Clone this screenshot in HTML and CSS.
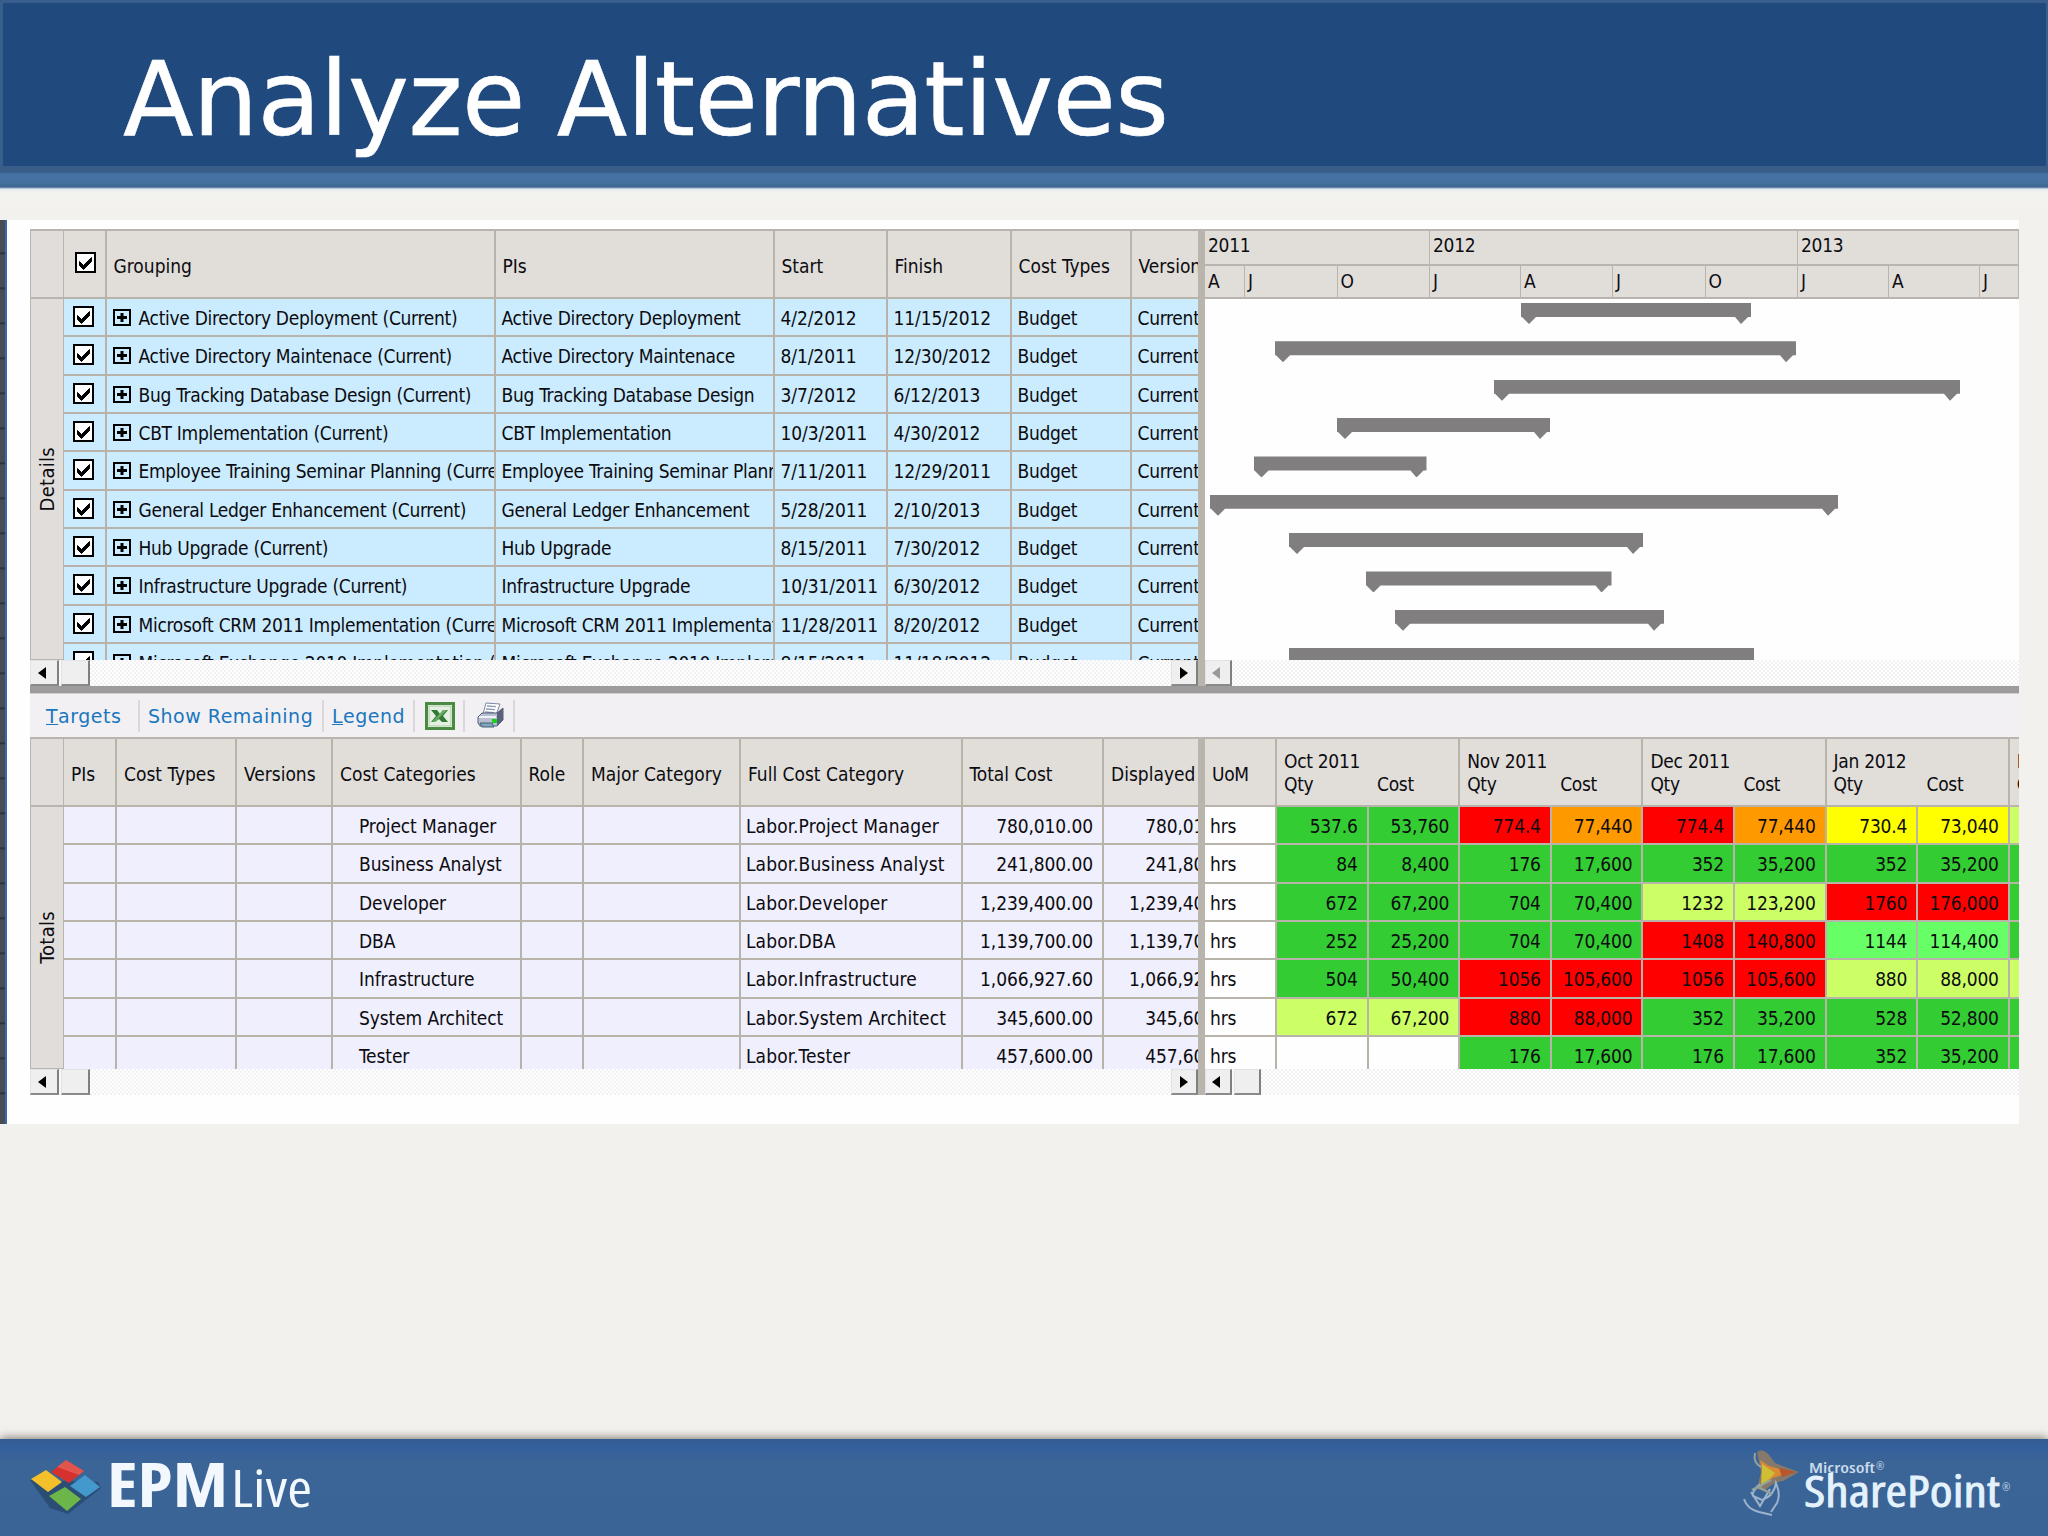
FILE: index.html
```html
<!DOCTYPE html>
<html lang="en">
<head>
    <meta charset="UTF-8">
    <title>Analyze Alternatives</title>
    <link rel="stylesheet" href="styles.css">
</head>
<body>
    <header class="title-bar">
        <h1>Analyze Alternatives</h1>
    </header>
    <div class="title-strip"></div>

    <main class="content">
        <div class="edge"></div>
        <div class="app">
            <section class="pane details">
                <div class="tab"><div class="tab-head"></div><div class="tab-label"><span>Details</span></div></div>
                <div class="grid-left">
                    <div class="row head details-cols" id="detailsHead"></div>
                    <div id="detailsRows"></div>
                </div>
                <div class="splitter"></div>
                <div class="gantt">
                    <div class="years"><span>2011</span><span>2012</span><span>2013</span></div>
                    <div class="months"><span>A</span><span>J</span><span>O</span><span>J</span><span>A</span><span>J</span><span>O</span><span>J</span><span>A</span><span>J</span></div>
                    <div id="bars"></div>
                </div>
            </section>
            <div class="scrolls">
                <div class="scroll scroll-left"><b class="btn prev"></b><b class="btn thumb"></b><b class="btn next"></b></div>
                <div class="splitter"></div>
                <div class="scroll scroll-right"><b class="btn prev disabled"></b></div>
            </div>
            <div class="divider"></div>

            <nav class="toolbar">
                <a class="targets"><u>T</u>argets</a>
                <a class="remaining">Show Remaining</a>
                <a class="legend"><u>L</u>egend</a>
                <span class="tool excel">
                    <svg width="30" height="28" viewBox="0 0 30 28">
                        <rect x="1.5" y="1.5" width="27" height="25" fill="#fff" stroke="#4b8a42" stroke-width="3"/>
                        <rect x="4" y="4" width="22" height="20" fill="#e4f1e1" stroke="#a5c99f"/>
                        <path d="M6 8h6l3 4 3-4h5l-5 6 5 6h-6l-3-3-4 3H6l5-6z" fill="#2f7a34"/>
                        <path d="M18 8h4l-12 12H7z" fill="#6cae69"/>
                    </svg>
                </span>
                <span class="tool printer">
                    <svg width="28" height="27" viewBox="0 0 28 27">
                        <path d="M9 1l14 1-4 11-13-1z" fill="#fff" stroke="#7b86a6"/>
                        <path d="M10 4l9 .6M9 7l9 .6M8 10l9 .6" stroke="#8f9ab5" stroke-width="1.3"/>
                        <path d="M5 11h15l6-5v12l-6 6H3l-2-3v-6z" fill="#b9c0d2" stroke="#545c78"/>
                        <path d="M20 11l6-5v12l-6 6z" fill="#59617b"/>
                        <path d="M2 15h17" stroke="#eef1f8" stroke-width="2"/>
                        <rect x="15" y="17" width="5" height="4" fill="#19d21c"/>
                        <path d="M3 21h12l2 4H5z" fill="#7fa7ba" stroke="#45607a"/>
                    </svg>
                </span>
            </nav>

            <section class="pane totals">
                <div class="tab"><div class="tab-head"></div><div class="tab-label"><span>Totals</span></div></div>
                <div class="grid-left">
                    <div class="row head totals-cols" id="totalsHead"></div>
                    <div id="totalsRows"></div>
                </div>
                <div class="splitter"></div>
                <div class="periods">
                    <div class="row head period-head" id="periodHead"></div>
                    <div id="periodRows"></div>
                </div>
            </section>
            <div class="scrolls">
                <div class="scroll scroll-left"><b class="btn prev"></b><b class="btn thumb"></b><b class="btn next"></b></div>
                <div class="splitter"></div>
                <div class="scroll scroll-right"><b class="btn prev"></b><b class="btn thumb"></b></div>
            </div>
        </div>
    </main>

    <footer class="footer">
        <svg class="epm" width="300" height="76" viewBox="20 1450 300 76">
            <path d="M30 1480l20 28 18 6 33-26-3-6z" fill="#22405f" opacity=".6"/>
            <path d="M66 1460l18 11-15 12-18-11z" fill="#d5312f"/>
            <path d="M66 1460l18 11-5 4-22-8z" fill="#ee7a6a" opacity=".5"/>
            <path d="M46 1470l16 12-14 10-17-13z" fill="#f3c02c"/>
            <path d="M85 1475l15 12-14 10-16-11z" fill="#4499cc"/>
            <path d="M65 1487l16 12-14 12-18-15z" fill="#6cb548"/>
            <text x="107" y="1507" class="epm-name" textLength="121" lengthAdjust="spacingAndGlyphs">EPM</text>
            <text x="231" y="1507" class="epm-live" textLength="81" lengthAdjust="spacingAndGlyphs">Live</text>
        </svg>
        <svg class="sharepoint" width="276" height="80" viewBox="1740 1446 276 80">
            <path d="M1757 1452q6-4 12 3l6 8 24 9-16 9q-12 2-18 10l-8-2 4-17z" fill="#86796c"/>
            <path d="M1760 1460l9 6 22 6-18 6-12 8 2-13z" fill="#d98a35"/>
            <path d="M1762 1464l13 9-14 14z" fill="#d0bf35"/>
            <path d="M1779 1468l17 4-14 5z" fill="#b9552c"/>
            <path d="M1760 1484q-9 9-7 12l9 4q12-4 14-17 5 12 1 20l-6 9M1744 1499q3 10 15 13l13 3M1751 1492l9 14 10-17" fill="none" stroke="#9db3cb" stroke-width="2"/>
            <path d="M1755 1453q-2 10 6 14M1752 1490l19-10M1756 1486l16 8" fill="none" stroke="#94a29a" stroke-width="2"/>
            <text x="1809" y="1473" class="ms" textLength="66" lengthAdjust="spacingAndGlyphs">Microsoft</text>
            <text x="1876" y="1470" class="reg">®</text>
            <text x="1804" y="1507" class="sp" textLength="196" lengthAdjust="spacingAndGlyphs">SharePoint</text>
            <text x="2002" y="1491" class="reg">®</text>
        </svg>
    </footer>

    <script>
        const check = '<svg class="check" width="21" height="21" viewBox="0 0 21 21"><rect x="1" y="1" width="19" height="19" fill="#fff" stroke="#000" stroke-width="2"/><path d="M4.500 9.500l4 4 8-8v4l-8 8-4-4z" fill="#000" stroke="#000"/></svg>';
        const plus = '<svg class="plus" width="18" height="17" viewBox="0 0 18 17"><rect x="1" y="1" width="16" height="15" fill="none" stroke="#000" stroke-width="2"/><path d="M4 8.500h10M9 4v9" stroke="#000" stroke-width="3"/></svg>';

        // name, start, finish, bar left, bar width
        const projects = [
            ['Active Directory Deployment', '4/2/2012', '11/15/2012', 316, 230],
            ['Active Directory Maintenace', '8/1/2011', '12/30/2012', 70, 521],
            ['Bug Tracking Database Design', '3/7/2012', '6/12/2013', 289, 466],
            ['CBT Implementation', '10/3/2011', '4/30/2012', 132, 213],
            ['Employee Training Seminar Planning', '7/11/2011', '12/29/2011', 48.5, 173],
            ['General Ledger Enhancement', '5/28/2011', '2/10/2013', 5, 628],
            ['Hub Upgrade', '8/15/2011', '7/30/2012', 84, 354],
            ['Infrastructure Upgrade', '10/31/2011', '6/30/2012', 160.5, 246],
            ['Microsoft CRM 2011 Implementation', '11/28/2011', '8/20/2012', 190, 269],
            ['Microsoft Exchange 2010 Implementation', '8/15/2011', '11/18/2012', 84, 465]
        ];

        const roles = [
            ['Project Manager', '780,010.00', '537.6 g|53,760 g|774.4 r|77,440 o|774.4 r|77,440 o|730.4 y|73,040 y| l'],
            ['Business Analyst', '241,800.00', '84 g|8,400 g|176 g|17,600 g|352 g|35,200 g|352 g|35,200 g| g'],
            ['Developer', '1,239,400.00', '672 g|67,200 g|704 g|70,400 g|1232 l|123,200 l|1760 r|176,000 r| g'],
            ['DBA', '1,139,700.00', '252 g|25,200 g|704 g|70,400 g|1408 r|140,800 r|1144 m|114,400 m| g'],
            ['Infrastructure', '1,066,927.60', '504 g|50,400 g|1056 r|105,600 r|1056 r|105,600 r|880 l|88,000 l| l'],
            ['System Architect', '345,600.00', '672 l|67,200 l|880 r|88,000 r|352 g|35,200 g|528 g|52,800 g| g'],
            ['Tester', '457,600.00', ' w| w|176 g|17,600 g|176 g|17,600 g|352 g|35,200 g| g']
        ];

        const cells = list => list.map(c => `<div class="cell">${c}</div>`).join('');

        document.getElementById('detailsHead').innerHTML =
            cells([check, 'Grouping', 'PIs', 'Start', 'Finish', 'Cost Types', 'Versions']);
        document.getElementById('detailsRows').innerHTML = projects.map(p =>
            `<div class="row details-cols">${cells([check, `${plus}${p[0]} (Current)`, p[0], p[1], p[2], 'Budget', 'Current'])}</div>`
        ).join('');
        document.getElementById('bars').innerHTML = projects.map(p =>
            `<div class="bar-row"><div class="bar" style="margin-left:${p[3]}px;width:${p[4]}px"></div></div>`
        ).join('');

        document.getElementById('totalsHead').innerHTML =
            cells(['PIs', 'Cost Types', 'Versions', 'Cost Categories', 'Role', 'Major Category', 'Full Cost Category', 'Total Cost', 'Displayed Cost']);
        document.getElementById('totalsRows').innerHTML = roles.map(r =>
            `<div class="row totals-cols">${cells(['', '', '', r[0], '', '', 'Labor.' + r[0], r[1], r[1]])}</div>`
        ).join('');

        document.getElementById('periodHead').innerHTML = '<div class="cell">UoM</div>' +
            ['Oct 2011', 'Nov 2011', 'Dec 2011', 'Jan 2012', 'Feb 2012'].map(m =>
                `<div class="cell period"><span>${m}</span><span>Qty</span><span>Cost</span></div>`
            ).join('');
        document.getElementById('periodRows').innerHTML = roles.map(r =>
            '<div class="row period-cols"><div class="cell">hrs</div>' + r[2].split('|').map(c => {
                const [value, color] = c.split(' ');
                return `<div class="cell ${color}">${value}</div>`;
            }).join('') + '</div>'
        ).join('');
    </script>
</body>
</html>
```
FILE: styles.css
```css
* {
    box-sizing: border-box;
}

body {
    margin: 0;
    width: 2048px;
    height: 1536px;
    overflow: hidden;
    display: flex;
    flex-direction: column;
    background: #f3f1ee;
    font-family: "DejaVu Sans Condensed", "DejaVu Sans", sans-serif;
    font-stretch: condensed;
    font-size: 19px;
    letter-spacing: -0.3px;
    color: #0c0c10;
}

/* Slide title */
.title-bar {
    height: 166px;
    background: #20497d;
    border: 3px solid #385f8c;
    border-right-width: 2px;
    border-bottom: 0;
    padding: 36px 0 0 120px;
}

h1 {
    margin: 0;
    font: 400 103px/120px "DejaVu Sans", sans-serif;
    letter-spacing: -0.6px;
    color: #fff;
    -webkit-text-stroke: 0.6px #fff;
    white-space: nowrap;
}

.title-strip {
    height: 54px;
    background: linear-gradient(#385d89 0, #385d89 6px, #4472a4 8px, #44719f 17px, #3c6491 21px, #dfe9f0 23px, #f2f2ee 26px, #f3f1ee 54px);
}

/* Captured application window */
.content {
    display: flex;
    width: 2019px;
    height: 904px;
    background: #fefefe;
}

.edge {
    width: 7px;
    border-right: 2px solid #3a68ab;
    background: repeating-linear-gradient(#474d52 0, #474d52 32px, #272b30 33px, #474d52 35px);
}

.app {
    width: 1989px;
    margin: 9px 0 0 23px;
}

.pane {
    display: flex;
    border-top: 2px solid #b9b4ae;
    overflow: hidden;
}

.details {
    height: 431px;
}

.totals {
    height: 332px;
}

.tab {
    width: 34px;
    flex: none;
    display: flex;
    flex-direction: column;
    background: #e1ddda;
    border: solid #b9b4ae;
    border-width: 0 1px 1px 1px;
}

.tab-head {
    height: 68px;
    border-bottom: 2px solid #b9b4ae;
}

.tab-label {
    flex: 1;
    display: flex;
    align-items: center;
    justify-content: center;
}

.tab-label span {
    writing-mode: vertical-rl;
    transform: rotate(180deg);
    font-size: 20px;
    letter-spacing: 0.3px;
}

.grid-left {
    width: 1134px;
    flex: none;
    overflow: hidden;
}

.splitter {
    width: 7px;
    flex: none;
    background: #b9b5ad;
}

.row {
    display: grid;
    width: max-content;
    height: 38.35px;
}

.cell {
    overflow: hidden;
    white-space: nowrap;
    padding: 6px 0 0 6px;
    line-height: 26px;
    border: solid #b9b4aa;
    border-width: 0 2px 2px 0;
}

.head {
    height: 68px;
    background: #e1deda;
    letter-spacing: 0;
}

.head .cell {
    padding: 22px 0 0 7px;
}

.details-cols {
    grid-template-columns: 42.5px 389px 279px 113px 124px 120px 150px;
}

#detailsRows .row {
    background: #cbebfe;
}

#detailsRows .cell {
    border-color: #b9b2aa;
}

/* start and finish dates */
#detailsRows .cell:nth-child(4),
#detailsRows .cell:nth-child(5) {
    letter-spacing: -0.1px;
}

.details-cols .cell:first-child {
    padding: 7px 0 0 9px;
}

.details-cols.head .cell:first-child {
    padding: 21px 0 0 11px;
}

.check,
.plus {
    display: block;
}

#detailsRows .plus {
    display: inline-block;
    margin-right: 8px;
    vertical-align: -1px;
}

/* Gantt */
.gantt,
.periods {
    width: 814px;
    overflow: hidden;
}

.years,
.months {
    display: grid;
    width: 814px;
    height: 35px;
    line-height: 28px;
    background: #e1deda;
    border-bottom: 2px solid #b9b4ae;
}

.years {
    grid-template-columns: 225px 368px 221px;
}

.months {
    height: 33px;
    grid-template-columns: 40px 92.5px 92.5px 91px 92px 92.5px 92.5px 91px 91px 39px;
}

.years span,
.months span {
    padding: 0 0 0 3px;
    border-right: 1px solid #b9b4ae;
}

.months span {
    padding-top: 1px;
}

.bar-row {
    display: flex;
    height: 38.35px;
    padding-top: 4px;
}

.bar {
    height: 21px;
    background: #807e7e;
    clip-path: polygon(0 0, 100% 0, 100% 14px, calc(100% - 3px) 14px, calc(100% - 10px) 100%, calc(100% - 16px) 14px, 15px 14px, 8px 100%, 1px 14px, 0 14px);
}

/* Scroll bars */
.scrolls {
    display: flex;
    height: 26px;
}

.scroll {
    display: flex;
    gap: 2px;
    background: repeating-conic-gradient(#fff 0 25%, #f2f1f3 0 50%) 0 0 / 4px 4px;
}

.scroll-left {
    width: 1168px;
}

.scroll-right {
    width: 814px;
}

.btn {
    display: flex;
    align-items: center;
    justify-content: center;
    width: 29px;
    background: #f0eff0;
    border: 1px solid #e2e2e2;
    border-right: 2px solid #808080;
    border-bottom: 2px solid #8a8a8a;
}

.scroll-right .btn {
    width: 27px;
}

.next {
    width: 27px;
    margin-left: auto;
}

.prev {
    padding-right: 4px;
}

.prev::before,
.next::before {
    content: "";
    border: solid transparent;
    border-width: 6px 8px 6px 0;
    border-right-color: #000;
}

.next::before {
    border-width: 6px 0 6px 8px;
    border-left-color: #000;
}

.disabled::before {
    border-right-color: #999;
}

.divider {
    height: 8px;
    background: #9d9b9c;
    border-bottom: 1px solid #d0cecf;
}

/* Toolbar */
.toolbar {
    display: flex;
    align-items: center;
    height: 43px;
    background: #f2f0f2;
    font: 19px/26px "DejaVu Sans", sans-serif;
    letter-spacing: 0.5px;
    color: #1a77bf;
}

.toolbar a,
.tool {
    display: flex;
    align-items: center;
    height: 32px;
    border-right: 2px solid #dad8da;
    white-space: nowrap;
}

.targets {
    width: 110px;
    padding-left: 16px;
}

.remaining {
    width: 184px;
    padding-left: 8px;
}

.legend {
    width: 91px;
    padding-left: 8px;
}

.tool {
    width: 50px;
    padding-left: 10px;
}

.printer {
    padding-left: 12px;
}

/* Totals */
.totals-cols {
    grid-template-columns: 53px 120px 96px 188.5px 62.5px 157px 221.5px 141.5px 149px;
    letter-spacing: -0.1px;
}

#totalsRows .row {
    background: #f0effd;
}

.totals-cols.head {
    letter-spacing: 0;
}

#totalsRows .cell:nth-child(4) {
    padding-left: 26px;
}

#totalsRows .cell:nth-child(7) {
    padding-left: 5px;
    letter-spacing: 0.1px;
}

#totalsRows .cell:nth-child(n+8),
.period-cols .cell:nth-child(n+2) {
    text-align: right;
    padding-right: 9px;
}

.period-head {
    grid-template-columns: 72px repeat(5, 183.2px);
    letter-spacing: -0.3px;
}

.period-cols {
    grid-template-columns: 72px repeat(10, 91.6px);
    letter-spacing: -0.2px;
}

.head .period {
    display: grid;
    grid-template-columns: 93px 1fr;
    grid-template-rows: 23px 23px;
    line-height: 23px;
    padding: 11px 0 0 7px;
}

.period span:first-child {
    grid-column: 1 / 3;
}

.period-cols .cell {
    padding-left: 5px;
}

.g { background: #33cc33; }
.r { background: #ff0000; }
.o { background: #ff9900; }
.y { background: #ffff00; }
.l { background: #ccff66; }
.m { background: #66ff66; }
.w { background: #fefefe; }

/* Footer */
.footer {
    display: flex;
    justify-content: space-between;
    align-items: flex-start;
    height: 97px;
    margin-top: auto;
    padding: 9px 32px 0 20px;
    background: linear-gradient(#345d90, #33609c 8px, #3b6497 22px, #3a6396);
    box-shadow: 0 -1px 9px rgba(80, 75, 65, 0.75);
}

.footer text {
    font-family: "Open Sans", "Noto Sans", sans-serif;
    fill: #f2f8fd;
    letter-spacing: 0;
}

.epm {
    margin-top: 2px;
}

.sharepoint {
    margin-top: -2px;
}

.footer .epm-name {
    font-size: 61px;
    font-weight: 700;
}

.footer .epm-live {
    font-size: 51px;
}

.footer .ms {
    font-size: 15px;
    font-weight: 600;
    fill: #c9dcec;
}

.footer .sp {
    font-size: 43px;
    fill: #e4f2fc;
    stroke: #e4f2fc;
    stroke-width: 0.8px;
}

.footer .reg {
    font-size: 10px;
    fill: #c9dcec;
}
```
